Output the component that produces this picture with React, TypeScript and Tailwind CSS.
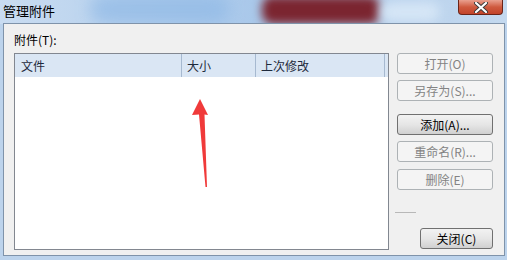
import type { ReactNode } from 'react'

const font = { fontFamily: '"Noto Sans CJK SC", "Liberation Sans", sans-serif' }

function Btn({
  children,
  enabled = false,
  className = '',
}: {
  children: ReactNode
  enabled?: boolean
  className?: string
}) {
  return (
    <div
      className={
        'flex h-[21px] items-center justify-center rounded-[3px] border text-[12px] leading-none ' +
        (enabled
          ? 'border-[#707070] bg-gradient-to-b from-[#f2f2f2] via-[#e6e6e6] to-[#d0d0d0] text-black '
          : 'border-[#adb2b5] bg-[#f4f4f4] text-[#838383] ') +
        className
      }
    >
      {children}
    </div>
  )
}

export default function App() {
  return (
    <div
      className="relative h-[260px] w-[507px] overflow-hidden bg-[#bcd3ec]"
      style={font}
    >
      {/* title bar */}
      <div className="relative h-[24px] overflow-hidden bg-gradient-to-r from-[#c9dcf1] via-[#a9c8ea] to-[#c4d9ef]">
        <div className="absolute left-[90px] top-[-6px] h-[30px] w-[140px] rounded-full bg-[#8fb9e6] opacity-70 blur-[8px]" />
        <div className="absolute left-[262px] top-[-4px] h-[28px] w-[118px] rounded-[10px] bg-[#7b2530] blur-[5px]" />
        <div className="absolute left-[380px] top-[2px] h-[20px] w-[60px] rounded-full bg-[#d6e6f6] blur-[6px]" />
        <span className="absolute left-[3px] top-[3px] text-[13px] leading-[16px] text-black">
          管理附件
        </span>
        <div className="absolute right-[4px] top-0 flex h-[15px] w-[45px] items-center justify-center rounded-b-[4px] border border-t-0 border-[#6b2418] bg-gradient-to-b from-[#e9a08f] via-[#cf5a3f] to-[#c2442a]">
          <svg width="14" height="11" viewBox="0 0 14 11">
            <path
              d="M2 1 L12 10 M12 1 L2 10"
              stroke="#3a3a3a"
              strokeWidth="4"
              strokeLinecap="round"
            />
            <path
              d="M2 1 L12 10 M12 1 L2 10"
              stroke="#ffffff"
              strokeWidth="2.2"
              strokeLinecap="round"
            />
          </svg>
        </div>
      </div>

      {/* client area */}
      <div className="absolute left-[3px] top-[23px] h-[233px] w-[502px] border border-[#7f93aa] bg-[#f0f0f0]">
        <div className="flex pl-[10px] pt-[8px]">
          <div className="w-[375px]">
            <div className="h-[21px] text-[12px] leading-[15px] text-black">
              附件(T):
            </div>
            <div className="relative h-[197px] border border-[#828790] bg-white">
              <div className="flex h-[23px] bg-[#dae6f4] text-[12px] text-[#1e2a3c]">
                <div className="flex w-[167px] items-center border-r border-[#a6b9d0] pl-[6px]">
                  文件
                </div>
                <div className="flex w-[74px] items-center border-r border-[#a6b9d0] pl-[5px]">
                  大小
                </div>
                <div className="flex w-[129px] items-center border-r border-[#a6b9d0] pl-[5px]">
                  上次修改
                </div>
              </div>
              <svg
                className="absolute left-[175px] top-[43px]"
                width="30"
                height="92"
                viewBox="0 0 30 92"
              >
                <path
                  d="M10 2 L18 18 L14.5 17.5 L17 90 L15.5 90 L9 17.5 L2 18 Z"
                  fill="#f03a3a"
                />
              </svg>
            </div>
          </div>
          <div className="ml-[8px] flex w-[96px] flex-col pt-[21px]">
            <Btn>打开(O)</Btn>
            <Btn className="mt-[6px]">另存为(S)...</Btn>
            <Btn enabled className="mt-[13px]">
              添加(A)...
            </Btn>
            <Btn className="mt-[6px]">重命名(R)...</Btn>
            <Btn className="mt-[7px]">删除(E)</Btn>
            <div className="mt-[22px] ml-[-2px] h-px w-[21px] bg-[#b8b8b8]" />
            <Btn enabled className="mt-[15px] ml-auto w-[73px]">
              关闭(C)
            </Btn>
          </div>
        </div>
      </div>
    </div>
  )
}
